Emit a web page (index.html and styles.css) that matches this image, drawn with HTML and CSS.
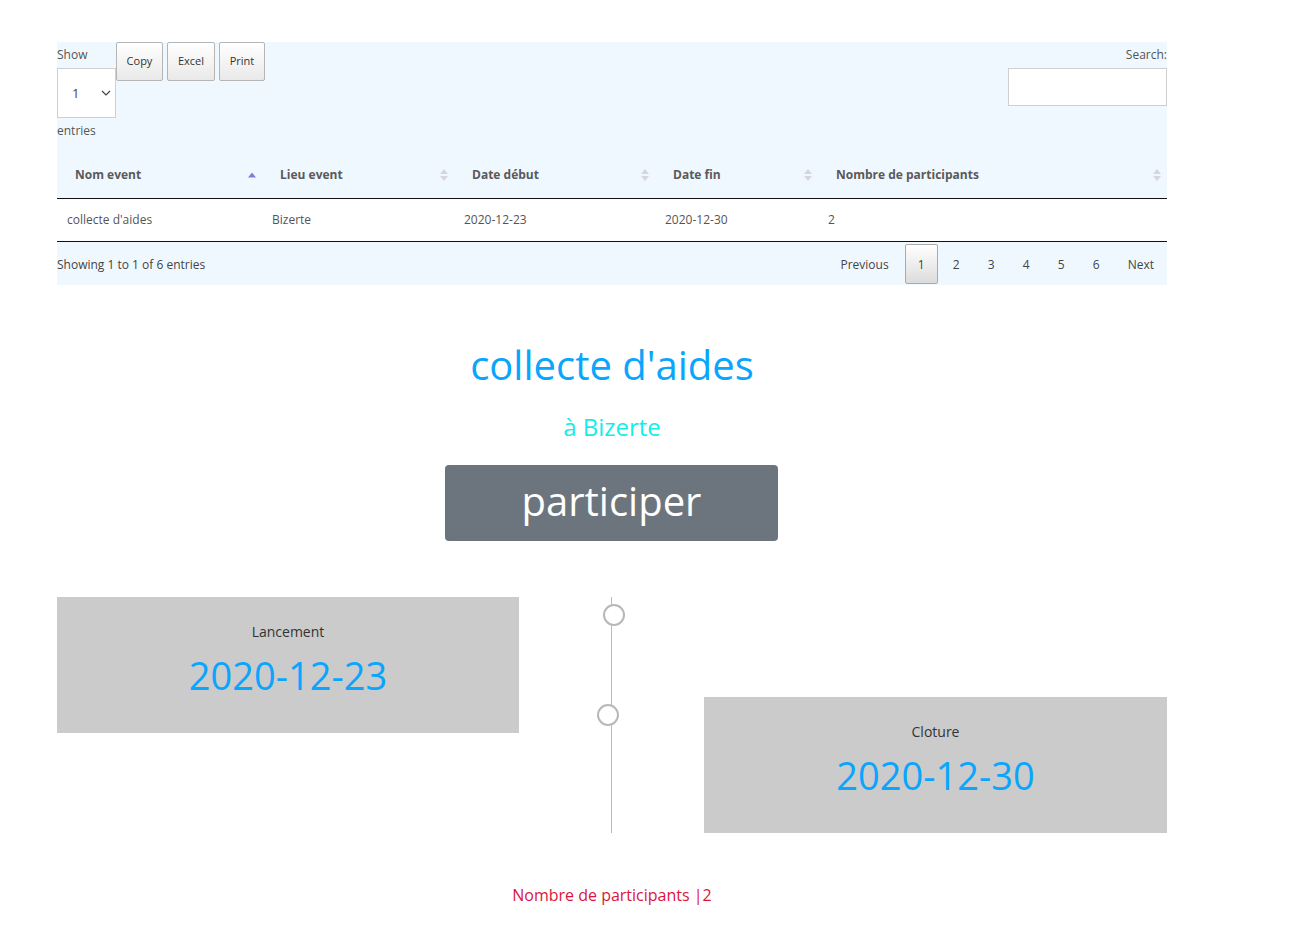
FILE: index.html
```html
<!DOCTYPE html>
<html lang="fr">
<head>
<meta charset="utf-8">
<title>Event</title>
<link rel="stylesheet" href="styles.css">
</head>
<body>
<div class="page">
  <section class="dt-wrapper">
    <div class="dt-top">
      <div class="dt-left">
        <div class="dt-length">
          <span class="lbl">Show</span>
          <div class="select-box"><span>1</span>
            <svg width="10" height="6" viewBox="0 0 10 6"><path d="M1 1l4 4 4-4" fill="none" stroke="#444" stroke-width="1.2"/></svg>
          </div>
          <span class="lbl">entries</span>
        </div>
        <div class="dt-buttons">
          <button class="dt-btn">Copy</button>
          <button class="dt-btn">Excel</button>
          <button class="dt-btn">Print</button>
        </div>
      </div>
      <div class="dt-search">
        <span class="lbl">Search:</span>
        <div class="search-input"></div>
      </div>
    </div>
    <table class="dt-table">
      <colgroup>
        <col class="c1"><col class="c2"><col class="c3"><col class="c4"><col class="c5">
      </colgroup>
      <thead>
        <tr>
          <th><div class="th-in"><span>Nom event</span><svg width="8" height="14" viewBox="0 0 8 14"><path d="M0 9.5L4 4.5L8 9.5Z" fill="#7c7ce0"/></svg></div></th>
          <th><div class="th-in"><span>Lieu event</span><svg width="8" height="14" viewBox="0 0 8 14"><path d="M0 6L4 1L8 6Z M0 8L4 13L8 8Z" fill="#d6d6dc"/></svg></div></th>
          <th><div class="th-in"><span>Date début</span><svg width="8" height="14" viewBox="0 0 8 14"><path d="M0 6L4 1L8 6Z M0 8L4 13L8 8Z" fill="#d6d6dc"/></svg></div></th>
          <th><div class="th-in"><span>Date fin</span><svg width="8" height="14" viewBox="0 0 8 14"><path d="M0 6L4 1L8 6Z M0 8L4 13L8 8Z" fill="#d6d6dc"/></svg></div></th>
          <th><div class="th-in"><span>Nombre de participants</span><svg width="8" height="14" viewBox="0 0 8 14"><path d="M0 6L4 1L8 6Z M0 8L4 13L8 8Z" fill="#d6d6dc"/></svg></div></th>
        </tr>
      </thead>
      <tbody>
        <tr>
          <td>collecte d'aides</td>
          <td>Bizerte</td>
          <td>2020-12-23</td>
          <td>2020-12-30</td>
          <td>2</td>
        </tr>
      </tbody>
    </table>
    <div class="dt-bottom">
      <div class="dt-info">Showing 1 to 1 of 6 entries</div>
      <div class="dt-paging">
        <span class="pg pg-prev">Previous</span>
        <span class="pg pg-current">1</span>
        <span class="pg">2</span>
        <span class="pg">3</span>
        <span class="pg">4</span>
        <span class="pg">5</span>
        <span class="pg">6</span>
        <span class="pg pg-next">Next</span>
      </div>
    </div>
  </section>

  <section class="event">
    <h1 class="event-title">collecte d'aides</h1>
    <p class="event-place">à Bizerte</p>
    <button class="btn-participer">participer</button>
  </section>

  <section class="timeline">
    <div class="tl-card tl-left">
      <div class="tl-label">Lancement</div>
      <div class="tl-date">2020-12-23</div>
    </div>
    <div class="tl-axis">
      <span class="tl-dot dot1"></span>
      <span class="tl-dot dot2"></span>
    </div>
    <div class="tl-right-col">
      <div class="tl-card tl-right">
        <div class="tl-label">Cloture</div>
        <div class="tl-date">2020-12-30</div>
      </div>
    </div>
  </section>

  <p class="participants">Nombre de participants |2</p>
</div>
</body>
</html>
```

FILE: styles.css
```css
* { box-sizing: border-box; }
html, body { margin: 0; padding: 0; background: #fff; }
body {
  font-family: "Open Sans", "Noto Sans", sans-serif;
  color: #555;
}
.page {
  width: 1110px;
  margin-left: 57px;
  padding-top: 42px;
}

/* DataTable area */
.dt-wrapper {
  background: #f0f8ff;
  font-size: 12px;
}
.lbl { display: block; color: #555; font-size: 12px; line-height: 16px; }
.dt-top {
  display: flex;
  justify-content: space-between;
  align-items: flex-start;
}
.dt-left { display: flex; align-items: flex-start; }
.dt-length { width: 59px; padding-top: 5px; }
.select-box {
  margin-top: 5px;
  width: 59px;
  height: 50px;
  background: #fff;
  border: 1px solid #cfcfcf;
  display: flex;
  align-items: center;
  justify-content: space-between;
  padding: 0 4px 0 14px;
  font-size: 13px;
  color: #444;
  margin-bottom: 5px;
}
.dt-buttons { display: flex; gap: 4px; }
.dt-btn {
  font-family: "Open Sans", "Noto Sans", sans-serif;
  font-size: 11px;
  color: #333;
  height: 39px;
  padding: 0 9px 2px;
  border: 1px solid #b5b5b5;
  border-radius: 2px;
  background: linear-gradient(#ffffff, #e9e9e9);
  cursor: pointer;
}
.dt-btn:first-child { width: 47px; }
.dt-btn:nth-child(2) { width: 48px; }
.dt-btn:nth-child(3) { width: 46px; }
.dt-search { width: 159px; padding-top: 5px; text-align: right; }
.search-input {
  margin-top: 5px;
  width: 159px;
  height: 38px;
  background: #fff;
  border: 1px solid #cfcfcf;
}

.dt-table {
  width: 100%;
  border-collapse: collapse;
  table-layout: fixed;
  margin-top: 11px;
}
.c1 { width: 205px; } .c2 { width: 192px; } .c3 { width: 201px; }
.c4 { width: 163px; } .c5 { width: 349px; }
.dt-table th {
  text-align: left;
  font-weight: 700;
  font-size: 12px;
  color: #5a5a5a;
  height: 48px;
  padding: 2px 6px 0 18px;
  border-bottom: 1px solid #111;
}
.th-in { display: flex; justify-content: space-between; align-items: center; }
.th-in svg { display: block; }
.dt-table td {
  background: #fff;
  height: 43px;
  padding: 0 10px;
  font-size: 12px;
  color: #555;
  border-bottom: 1px solid #111;
}
.dt-bottom {
  display: flex;
  justify-content: space-between;
  align-items: center;
  height: 43px;
  padding-top: 2px;
}
.dt-info { color: #444; }
.dt-paging { display: flex; align-items: center; padding-right: 4px; }
.pg {
  display: flex;
  align-items: center;
  justify-content: center;
  min-width: 35px;
  height: 40px;
  color: #444;
  font-size: 12px;
}
.pg-prev { padding: 0 15px 0 9px; }
.pg-next { padding: 0 9px 0 14px; }
.pg-current {
  min-width: 33px;
  border: 1px solid #aaa;
  border-radius: 2px;
  background: linear-gradient(#ffffff, #dcdcdc);
  margin: 0 1px;
}

/* Event */
.event { text-align: center; }
.event-title {
  margin: 44px 0 0;
  font-weight: 400;
  font-size: 40px;
  line-height: 72px;
  color: #0aa5fd;
}
.event-place {
  margin: 10px 0 0;
  font-size: 24px;
  line-height: 32px;
  color: #14ecec;
}
.btn-participer {
  margin: 22px 1px 0 0;
  width: 333px;
  height: 76px;
  border: 0;
  border-radius: 4px;
  background: #6c757d;
  color: #fff;
  font-family: "Open Sans", "Noto Sans", sans-serif;
  font-size: 40px;
  line-height: 1;
  padding: 0 0 4px;
}

/* Timeline */
.timeline {
  margin-top: 56px;
  display: grid;
  grid-template-columns: 462px 185px 463px;
  height: 236px;
}
.tl-card {
  background: #cbcbcb;
  height: 136px;
  text-align: center;
  padding-top: 25px;
}
.tl-label { font-size: 14px; line-height: 20px; color: #333; }
.tl-date { font-size: 38px; line-height: 50px; color: #0aa5fd; margin-top: 8px; }
.tl-right-col { display: flex; flex-direction: column; justify-content: flex-end; }
.tl-axis { position: relative; }
.tl-axis::before {
  content: "";
  position: absolute;
  left: 92px;
  top: 0;
  bottom: 0;
  width: 1px;
  background: #bdbdbd;
}
.tl-dot {
  position: absolute;
  width: 22px;
  height: 22px;
  border: 2px solid #b8b8b8;
  border-radius: 50%;
  background: #fff;
}
.dot1 { left: 84px; top: 7px; }
.dot2 { left: 78px; top: 107px; }

.participants {
  margin: 50px 0 0;
  text-align: center;
  color: #dc143c;
  font-size: 16px;
  line-height: 24px;
}
```
